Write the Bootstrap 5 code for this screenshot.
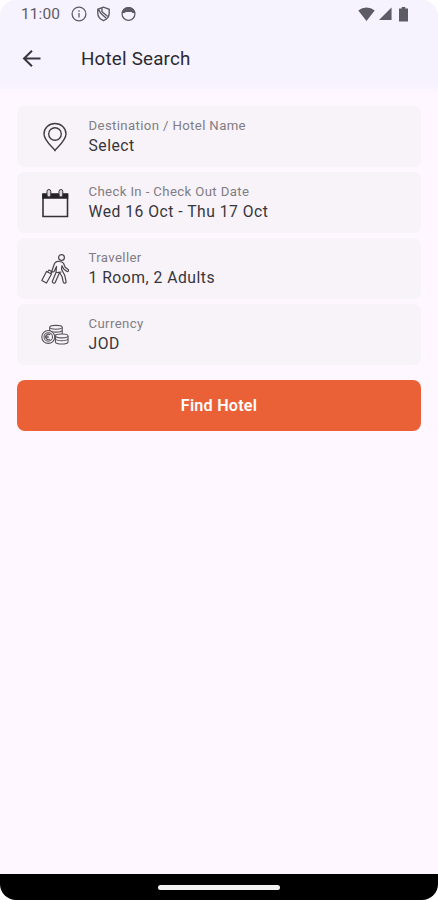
<!DOCTYPE html>
<html lang="en">
<head>
<meta charset="utf-8">
<meta name="viewport" content="width=device-width, initial-scale=1">
<title>Hotel Search</title>
<link href="https://cdn.jsdelivr.net/npm/bootstrap@5.3.0/dist/css/bootstrap.min.css" rel="stylesheet">
<style>
body{font-family:Roboto,sans-serif;background:#fff;color:#2b2a2f}
svg{display:block;flex:none}
.phone{height:900px;background:#fef7ff;border-radius:16px;overflow:hidden}
.top-area{background:linear-gradient(#f6f3ff 84px,#fef7ff 95px);height:91px}
.status{height:28px;padding:0 30px 0 21px;color:#5d5b63}
.clock{font-size:15.5px;line-height:28px;letter-spacing:.1px;width:50px}
.battery{margin-left:7px}
.title-bar{height:62px;padding-left:22px}
.title-text{font-size:18.8px;line-height:24px;letter-spacing:.2px;margin:0 0 0 39px;font-weight:400}
.form-area{padding:15px 17px 0;gap:5px}
.field{height:60.9px;background:#f7f3f9;border-radius:7px;padding-left:24px;text-align:left;border:0;color:inherit}
.field-text{margin-left:19.5px}
.field svg{width:28px;margin-top:2px}
.field-label{font-size:13.2px;line-height:19px;letter-spacing:.37px;color:#807d84}
.field-value{font-size:15.7px;line-height:22px;letter-spacing:.5px;color:#38363c}
.btn-find{--bs-btn-bg:#eb6137;--bs-btn-color:#fff;--bs-btn-hover-bg:#d9552d;--bs-btn-hover-color:#fff;height:51px;border:0;border-radius:8px;font-size:16.2px;font-weight:600;letter-spacing:.2px;margin-top:10.6px}
.nav-strip{height:26px;background:#000}
.handle{width:122px;height:5px;background:#f2f2f2}
</style>
<script src="https://cdn.jsdelivr.net/npm/bootstrap@5.3.0/dist/js/bootstrap.bundle.min.js"></script>
</head>
<body>
<div class="phone d-flex flex-column">
  <header class="top-area">
    <div class="status d-flex align-items-center">
      <span class="clock">11:00</span>
      <svg width="16" height="16" viewBox="0 0 16 16" fill="none" stroke="currentColor" stroke-width="1.3"><circle cx="8" cy="8" r="6.900"/><path d="M8 7v4.600M8 4.200v1.500"/></svg>
      <svg class="ms-2" width="17" height="16" viewBox="0 0 16 16" fill="none" stroke="currentColor" stroke-width="1.400"><path d="M8 1.200 2.300 3.300v4c0 3.400 2.400 6 5.700 7.400 3.300-1.400 5.700-4 5.700-7.400v-4zM3 3.300l2.500 4.200 5 4.500M6.500 2.200v3.500l5.500 4.500"/></svg>
      <svg class="ms-2" width="17" height="16" viewBox="0 0 17 16"><circle cx="8.500" cy="8" r="6.400" fill="none" stroke="currentColor" stroke-width="1.300"/><path d="M1.200 6.500 3.500 3a7 7 0 0 1 10 0l2.300 3.500-2.800.7-1.500-1.200H6L4 7.200z" fill="currentColor"/></svg>
      <svg class="ms-auto" width="17" height="15" viewBox="0 0 17 15" fill="currentColor"><path d="M.3 3.600a12.500 12.500 0 0 1 16.400 0L8.500 14z"/></svg>
      <svg class="ms-1" width="13" height="14" viewBox="0 0 14 14" fill="currentColor"><path d="M13.500 0v13.500H0z"/></svg>
      <svg class="battery" width="9" height="15" viewBox="0 0 9 15" fill="currentColor"><path d="M2.700 0h3.600v1.500H9V14.500H0V1.500h2.700z"/></svg>
    </div>
    <div class="title-bar d-flex align-items-center">
      <svg width="20" height="18" viewBox="0 0 20 18" fill="none" stroke="#3a383f" stroke-width="2"><path d="M18.500 8.500H2.500M10 .7 2 8.500l8 7.800"/></svg>
      <h1 class="title-text">Hotel Search</h1>
    </div>
  </header>

  <main class="form-area d-flex flex-column flex-grow-1">
    <button class="field d-flex align-items-center">
      <svg height="30" viewBox="0 0 28 30" fill="none" stroke="#403e44" stroke-width="1.400"><path d="M14 28.500C11.500 25 3 18.500 3 12a11 10.500 0 0 1 22 0C25 18.500 16.500 25 14 28.500z"/><circle cx="14" cy="12" r="6.300"/></svg>
      <span class="field-text d-flex flex-column"><span class="field-label">Destination / Hotel Name</span><span class="field-value">Select</span></span>
    </button>
    <button class="field d-flex align-items-center">
      <svg height="30" viewBox="0 0 28 30"><path d="M2 6h24.500v22.500H2z" fill="none" stroke="#343238" stroke-width="1.600"/><path d="M1.200 5.800h26v5H1.200z" fill="#242228"/><rect x="6" y="1.500" width="3.800" height="7.500" rx="1.900" fill="#d8d4da" stroke="#343238"/><rect x="18" y="1.500" width="3.800" height="7.500" rx="1.900" fill="#d8d4da" stroke="#343238"/></svg>
      <span class="field-text d-flex flex-column"><span class="field-label">Check In - Check Out Date</span><span class="field-value">Wed 16 Oct - Thu 17 Oct</span></span>
    </button>
    <button class="field d-flex align-items-center">
      <svg height="32" viewBox="0 0 28 32" fill="none" stroke="#47454b" stroke-width="1.200" stroke-linejoin="round"><circle cx="20.500" cy="4.500" r="2.900"/><path d="M18 8.500c-1.500-.5-3.500.5-4.500 2L11 17.500c-.3 1.300 1.500 2 2.200.8l2.300-4.800-.5 6-3.500 8.500c-.7 2 2 3 2.800 1.200l3.200-7.200 1-2.500 2.500 4 1.300 5.700c.8 1.800 3.300 1 2.700-1l-1.300-6-3.200-6 .5-3.500 1.700 3.300 3 2.300c1.500.8 2.500-1.200 1.200-2l-2.700-2-1.700-4c-.7-1.200-2.500-1.800-4.500-1.800zM15.500 19.500l5-.5M11.500 18.500 9.500 21M5.500 18.500l5 2.500-5 9-4.700-2.500zM6.500 19l1.500-2 2.500 1.500-.5 2"/></svg>
      <span class="field-text d-flex flex-column"><span class="field-label">Traveller</span><span class="field-value">1 Room, 2 Adults</span></span>
    </button>
    <button class="field d-flex align-items-center">
      <svg height="22" viewBox="0 0 29 22" fill="#f7f2f9" stroke="#55525a" stroke-width="1.100"><path d="M9 3v8h13V3"/><ellipse cx="15.500" cy="3" rx="6.500" ry="2"/><path d="M9 6.300c1 2.300 12 2.300 13 0" fill="none"/><circle cx="7.500" cy="13" r="6.700"/><circle cx="7.500" cy="13" r="4.400"/><path d="M9.500 10.800a2.800 2.800 0 1 0 0 4.400M4 12.300h4M4 13.800h4" fill="none"/><path d="M15 12v6.500c1 2.500 12 2.500 13 0V12"/><ellipse cx="21.500" cy="12" rx="6.500" ry="2"/><path d="M15 15c1 2.500 12 2.500 13 0" fill="none"/></svg>
      <span class="field-text d-flex flex-column"><span class="field-label">Currency</span><span class="field-value">JOD</span></span>
    </button>
    <button class="btn btn-find w-100">Find Hotel</button>
  </main>

  <footer class="nav-strip d-flex align-items-center justify-content-center"><div class="handle rounded-pill"></div></footer>
</div>
</body>
</html>
